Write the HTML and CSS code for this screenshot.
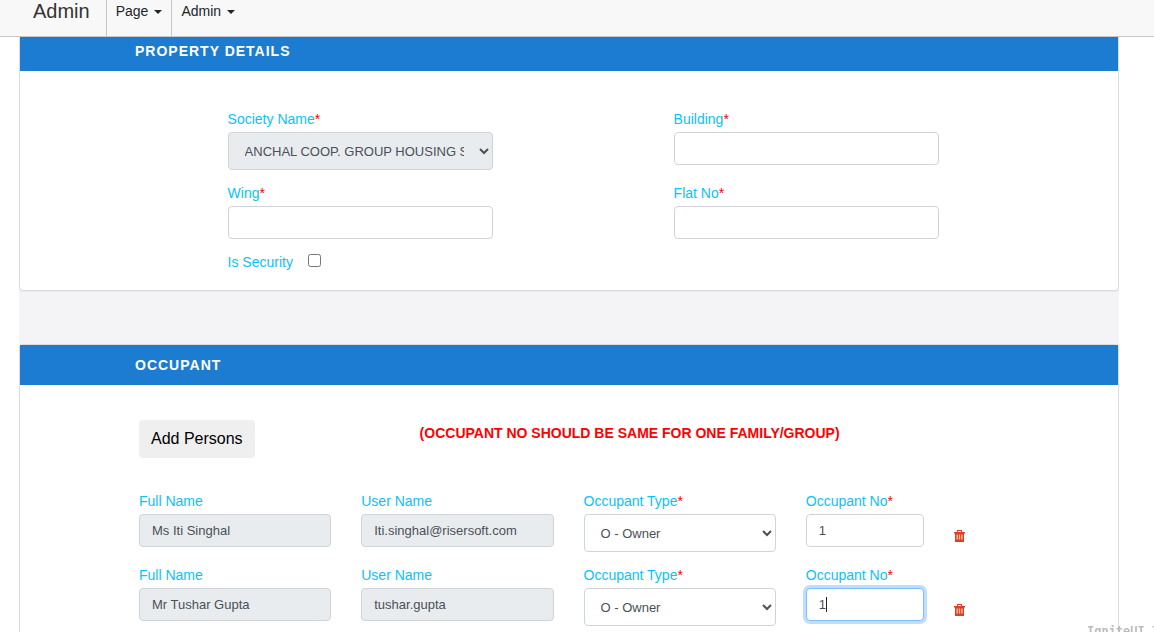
FILE: index.html
```html
<!DOCTYPE html>
<html lang="en">
<head>
<meta charset="utf-8">
<title>Property Details</title>
<link rel="stylesheet" href="styles.css">
</head>
<body>
<nav class="navbar">
  <a class="brand" href="#">Admin</a>
  <button class="nav-item" type="button">Page <span class="caret"></span></button>
  <button class="nav-item" type="button">Admin <span class="caret"></span></button>
</nav>

<main class="content">
  <section class="card">
    <h2 class="card-title">PROPERTY DETAILS</h2>
    <div class="property-form">
      <div class="field">
        <label for="society">Society Name<span class="required">*</span></label>
        <select id="society" class="control select" disabled><option>ANCHAL COOP. GROUP HOUSING SOCIETY</option></select>
      </div>
      <div class="field">
        <label for="building">Building<span class="required">*</span></label>
        <input id="building" class="control" type="text">
      </div>
      <div class="field">
        <label for="wing">Wing<span class="required">*</span></label>
        <input id="wing" class="control" type="text">
      </div>
      <div class="field">
        <label for="flat">Flat No<span class="required">*</span></label>
        <input id="flat" class="control" type="text">
      </div>
      <div class="field check-field">
        <label for="security">Is Security</label>
        <input id="security" class="checkbox" type="checkbox">
      </div>
    </div>
  </section>

  <section class="card">
    <h2 class="card-title">OCCUPANT</h2>
    <div class="occupants">
      <div class="toolbar">
        <button class="add-button" type="button">Add Persons</button>
        <p class="notice">(OCCUPANT NO SHOULD BE SAME FOR ONE FAMILY/GROUP)</p>
      </div>
      <div class="occupant-row">
        <div class="field wide">
          <label for="name1">Full Name</label>
          <input id="name1" class="control" type="text" value="Ms Iti Singhal" readonly>
        </div>
        <div class="field wide">
          <label for="user1">User Name</label>
          <input id="user1" class="control" type="text" value="Iti.singhal@risersoft.com" readonly>
        </div>
        <div class="field wide">
          <label for="type1">Occupant Type<span class="required">*</span></label>
          <select id="type1" class="control select"><option>O - Owner</option></select>
        </div>
        <div class="field narrow">
          <label for="no1">Occupant No<span class="required">*</span></label>
          <input id="no1" class="control" type="text" value="1">
        </div>
        <button class="delete" type="button" aria-label="Delete Ms Iti Singhal">
          <svg width="11" height="12" viewBox="0 0 11 12"><path fill="#dc3c32" d="M3 0h5v2h3v1.500h-1V12H1V3.500H0V2h3zM4 1v1h3V1z"/><path fill="#fbc98a" d="M2.500 4.500h1.300v5H2.500zM4.850 4.500h1.300v5h-1.300zM7.200 4.500h1.300v5H7.200z"/></svg>
        </button>
      </div>
      <div class="occupant-row">
        <div class="field wide">
          <label for="name2">Full Name</label>
          <input id="name2" class="control" type="text" value="Mr Tushar Gupta" readonly>
        </div>
        <div class="field wide">
          <label for="user2">User Name</label>
          <input id="user2" class="control" type="text" value="tushar.gupta" readonly>
        </div>
        <div class="field wide">
          <label for="type2">Occupant Type<span class="required">*</span></label>
          <select id="type2" class="control select"><option>O - Owner</option></select>
        </div>
        <div class="field narrow">
          <label for="no2">Occupant No<span class="required">*</span></label>
          <div class="active-entry">
            <input id="no2" class="control active" type="text" value="1">
            <span class="text-cursor"></span>
          </div>
        </div>
        <button class="delete" type="button" aria-label="Delete Mr Tushar Gupta">
          <svg width="11" height="12" viewBox="0 0 11 12"><path fill="#dc3c32" d="M3 0h5v2h3v1.500h-1V12H1V3.500H0V2h3zM4 1v1h3V1z"/><path fill="#fbc98a" d="M2.500 4.500h1.300v5H2.500zM4.850 4.500h1.300v5h-1.300zM7.200 4.500h1.300v5H7.200z"/></svg>
        </button>
      </div>
    </div>
  </section>
</main>
<div class="watermark">IgniteUI T</div>
</body>
</html>
```
FILE: styles.css
```css
* { box-sizing: border-box; }

body {
  margin: 0;
  height: 100vh;
  overflow: hidden;
  background: #fff;
  color: #212529;
  font: 14px/16px "Liberation Sans", Arial, sans-serif;
}

button, input, select { font-family: inherit; }

/* Navigation */
.navbar {
  position: fixed;
  inset: 0 0 auto;
  z-index: 2;
  display: flex;
  height: 37px;
  padding-left: 17px;
  background: #f8f8f8;
  border-bottom: 1px solid #c6c6c6;
}
.brand {
  padding: 0 16px;
  color: #333;
  font-size: 20px;
  line-height: 22px;
  text-decoration: none;
}
.nav-item {
  display: flex;
  align-items: flex-start;
  gap: 6px;
  padding: 3px 9px;
  border: 0;
  border-left: 1px solid #c6c6c6;
  background: none;
  color: #212529;
  font-size: 14px;
  line-height: 16px;
}
.caret {
  margin-top: 7px;
  border: 4px solid transparent;
  border-top-color: #212529;
  border-bottom: 0;
}

/* Cards */
.content {
  display: flex;
  flex-direction: column;
  gap: 53px;
  min-height: 100vh;
  margin: 0 35px 0 19px;
  padding-top: 30px;
  background: #f4f4f7;
}
.card {
  background: #fff;
  border: 1px solid #dcdcdc;
  border-radius: 4px;
  box-shadow: 0 1px 1px #0000000d;
}
.card-title {
  margin: 0;
  padding: 12px 115px;
  background: #1c7cd2;
  color: #fff;
  font-size: 14px;
  line-height: 16px;
  letter-spacing: 1px;
}

/* Form fields */
.property-form {
  display: grid;
  grid-template-columns: 1fr 1fr;
  gap: 15px 3px;
  padding: 40px 90px 20px 119px;
}
.property-form .field {
  width: 60%;
  margin-left: 20%;
}
.field label {
  display: block;
  margin-bottom: 5px;
  color: #0bc1fc;
}
.required { color: #f00; }
.control {
  display: block;
  width: 100%;
  height: 33px;
  padding: 0 12px;
  border: 1px solid #ced4da;
  border-radius: 4px;
  background: #fff;
  color: #495057;
  font-size: 13px;
}
.select { height: 38px; }
.control:disabled, .control:read-only:not(.select) { background: #e9ecef; }
.control:disabled { opacity: 1; }
.check-field {
  display: flex;
  align-items: flex-start;
  gap: 15px;
}
.check-field label { margin: 0; }
.checkbox { margin: 0; }

/* Occupants */
.occupants {
  display: flex;
  flex-direction: column;
  gap: 15px;
  padding: 35px 120px 20px 119px;
}
.toolbar {
  display: flex;
  align-items: flex-start;
  gap: 165px;
  margin-bottom: 20px;
}
.add-button {
  height: 38px;
  padding: 0 12px;
  border: 0;
  border-radius: 4px;
  background: #efefef;
  color: #000;
  font-size: 16px;
}
.notice {
  margin: 5px 0 0;
  color: #f00;
  font-size: 14px;
  font-weight: bold;
}
.occupant-row {
  display: grid;
  grid-template-columns: repeat(12, minmax(0, 1fr));
  column-gap: 30px;
}
.wide { grid-column: span 3; }
.narrow { grid-column: span 2; }
.active-entry { position: relative; }
.control.active {
  border-color: #80bdff;
  box-shadow: 0 0 0 3px #bfdeff;
}
.text-cursor {
  position: absolute;
  top: 9px;
  left: 20px;
  width: 1px;
  height: 15px;
  background: #212529;
}
.delete {
  align-self: start;
  justify-self: start;
  margin-top: 37px;
  padding: 0;
  border: 0;
  background: none;
}
.delete svg { display: block; }

.watermark {
  position: fixed;
  top: calc(100vh - 8px);
  left: calc(100vw - 67px);
  color: #bbb;
  font: bold 12px/14px "DejaVu Sans Mono", monospace;
  white-space: nowrap;
}
```
